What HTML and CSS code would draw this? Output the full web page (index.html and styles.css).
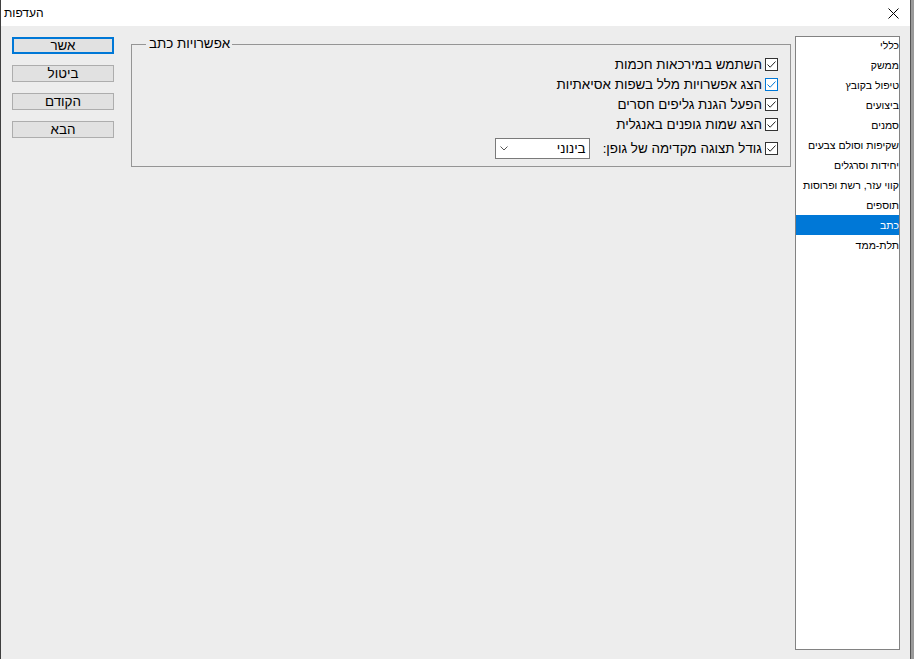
FILE: index.html
```html
<!DOCTYPE html>
<html lang="he">
<head>
<meta charset="utf-8">
<title>העדפות</title>
<link rel="stylesheet" href="styles.css">
</head>
<body>
<div class="window">
  <div class="titlebar">
    <span class="title">העדפות</span>
    <svg class="close" width="11" height="11" viewBox="0 0 11 11"><path d="M0.5 0.5 L10.5 10.5 M10.5 0.5 L0.5 10.5" stroke="#000" stroke-width="1" fill="none"/></svg>
  </div>
  <div class="content">
    <div class="buttons">
      <button class="btn btn-default">אשר</button>
      <button class="btn">ביטול</button>
      <button class="btn">הקודם</button>
      <button class="btn">הבא</button>
    </div>
    <fieldset class="group">
      <legend class="group-title">אפשרויות כתב</legend>
      <div class="options">
        <div class="opt"><span class="cb"><svg viewBox="0 0 11 11"><path d="M1.5 5.5 L4.2 8.2 L9.5 2.5" stroke="#222" stroke-width="1" fill="none"/></svg></span><span class="opt-text">השתמש במירכאות חכמות</span></div>
        <div class="opt"><span class="cb cb-focus"><svg viewBox="0 0 11 11"><path d="M1.5 5.5 L4.2 8.2 L9.5 2.5" stroke="#0078d7" stroke-width="1" fill="none"/></svg></span><span class="opt-text">הצג אפשרויות מלל בשפות אסיאתיות</span></div>
        <div class="opt"><span class="cb"><svg viewBox="0 0 11 11"><path d="M1.5 5.5 L4.2 8.2 L9.5 2.5" stroke="#222" stroke-width="1" fill="none"/></svg></span><span class="opt-text">הפעל הגנת גליפים חסרים</span></div>
        <div class="opt"><span class="cb"><svg viewBox="0 0 11 11"><path d="M1.5 5.5 L4.2 8.2 L9.5 2.5" stroke="#222" stroke-width="1" fill="none"/></svg></span><span class="opt-text">הצג שמות גופנים באנגלית</span></div>
        <div class="opt opt-select"><span class="cb"><svg viewBox="0 0 11 11"><path d="M1.5 5.5 L4.2 8.2 L9.5 2.5" stroke="#222" stroke-width="1" fill="none"/></svg></span><span class="opt-text">גודל תצוגה מקדימה של גופן:</span>
          <div class="select"><span class="select-value">בינוני</span><svg class="chev" width="8" height="5" viewBox="0 0 8 5"><path d="M0.5 0.5 L4 4 L7.5 0.5" stroke="#555" stroke-width="1" fill="none"/></svg></div>
        </div>
      </div>
    </fieldset>
    <div class="list">
      <ul class="items">
        <li>כללי</li>
        <li>ממשק</li>
        <li>טיפול בקובץ</li>
        <li>ביצועים</li>
        <li>סמנים</li>
        <li>שקיפות וסולם צבעים</li>
        <li>יחידות וסרגלים</li>
        <li>קווי עזר, רשת ופרוסות</li>
        <li>תוספים</li>
        <li class="sel">כתב</li>
        <li>תלת-ממד</li>
      </ul>
    </div>
  </div>
</div>
</body>
</html>
```
FILE: styles.css
```css
* { box-sizing: border-box; }
html, body { margin: 0; padding: 0; }
body {
  width: 914px;
  height: 659px;
  overflow: hidden;
  background: #9a9a9a;
  font-family: "Liberation Sans", Arial, "DejaVu Sans", sans-serif;
  color: #000;
}
.window {
  width: 911px;
  height: 659px;
  background: #ededed;
  border-left: 1px solid #3f3f3f;
  border-right: 1px solid #555;
  display: flex;
  flex-direction: column;
}
.titlebar {
  height: 26px;
  flex: 0 0 26px;
  background: #fff;
  display: flex;
  align-items: center;
  justify-content: space-between;
  padding: 0 11px 0 3px;
}
.title { font-size: 12px; }
.close { display: block; }
.content {
  flex: 1;
  display: flex;
  align-items: flex-start;
  padding: 10px 10px 0 11px;
}
.buttons {
  flex: 0 0 102px;
  display: flex;
  flex-direction: column;
  gap: 11px;
  margin-top: 1px;
}
.btn {
  height: 17px;
  padding: 0;
  border: 1px solid #adadad;
  background: #e1e1e1;
  font-family: "Liberation Sans", Arial, sans-serif;
  font-size: 13.4px;
  line-height: 15px;
  color: #000;
  direction: rtl;
}
.btn-default { border: 2px solid #0078d7; line-height: 13px; }
.group {
  flex: 0 0 660px;
  min-width: 0;
  margin: 0 0 0 17px;
  border: 1px solid #959595;
  padding: 2px 12px 7px 12px;
}
.group-title {
  font-size: 13.4px;
  line-height: 16px;
  padding: 0 2px 0 3px;
  margin-left: 2px;
  direction: rtl;
}
.options { direction: rtl; display: flex; flex-direction: column; }
.opt {
  height: 20px;
  display: flex;
  align-items: center;
  gap: 3px;
  font-size: 13.4px;
}
.opt-select { height: 21px; margin-top: 4px; }
.opt-select .opt-text { margin-left: 10px; }
.cb {
  width: 13px;
  height: 13px;
  border: 1px solid #333;
  background: #fff;
  display: flex;
  align-items: center;
  justify-content: center;
}
.cb svg { width: 11px; height: 11px; display: block; }
.cb-focus { border-color: #0078d7; }
.select {
  width: 95px;
  height: 21px;
  border: 1px solid #7a7a7a;
  background: #fff;
  display: flex;
  align-items: center;
  justify-content: space-between;
  padding: 0 3px 0 4px;
  font-size: 13.4px;
}
.chev { display: block; }
.list {
  flex: 0 0 105px;
  height: 614px;
  margin-left: 4px;
  background: #fff;
  border: 1px solid #828282;
  overflow: hidden;
}
.items {
  list-style: none;
  margin: -2px 0 0;
  padding: 0;
  direction: rtl;
}
.items li {
  height: 20px;
  line-height: 20px;
  font-size: 10.5px;
  white-space: nowrap;
  text-align: right;
  padding-right: 0;
}
.items li.sel { background: #0078d7; color: #fff; }
```
